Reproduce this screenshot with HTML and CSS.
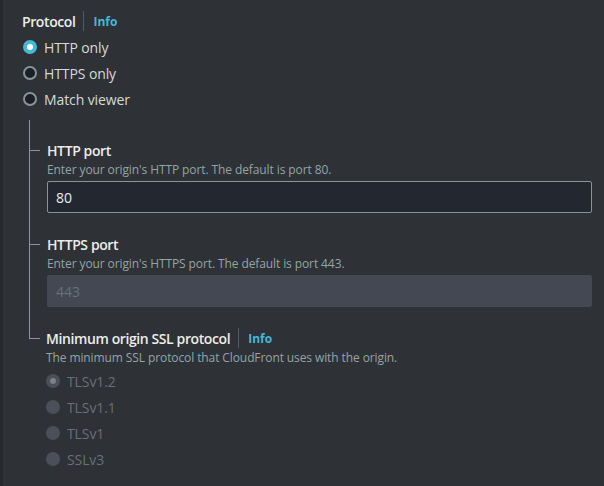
FILE: index.html
```html
<!DOCTYPE html>
<html>
<head>
<meta charset="utf-8">
<link rel="stylesheet" href="styles.css">
</head>
<body>
<div class="page">
  <div class="edge"></div>
  <div class="content">
    <div class="label-row">
      <span class="label">Protocol</span>
      <span class="sep"></span>
      <span class="info">Info</span>
    </div>
    <div class="radios">
      <div class="radio-row"><span class="radio checked"></span><span class="radio-text">HTTP only</span></div>
      <div class="radio-row"><span class="radio"></span><span class="radio-text">HTTPS only</span></div>
      <div class="radio-row"><span class="radio"></span><span class="radio-text">Match viewer</span></div>
    </div>
    <div class="tree">
      <div class="node first">
        <div class="label-row"><span class="label">HTTP port</span></div>
        <div class="desc">Enter your origin's HTTP port. The default is port 80.</div>
        <div class="input">80</div>
      </div>
      <div class="node">
        <div class="label-row"><span class="label">HTTPS port</span></div>
        <div class="desc">Enter your origin's HTTPS port. The default is port 443.</div>
        <div class="input disabled">443</div>
      </div>
      <div class="node last">
        <div class="label-row">
          <span class="label">Minimum origin SSL protocol</span>
          <span class="sep"></span>
          <span class="info">Info</span>
        </div>
        <div class="desc">The minimum SSL protocol that CloudFront uses with the origin.</div>
        <div class="radios dis">
          <div class="radio-row"><span class="radio checked"></span><span class="radio-text">TLSv1.2</span></div>
          <div class="radio-row"><span class="radio"></span><span class="radio-text">TLSv1.1</span></div>
          <div class="radio-row"><span class="radio"></span><span class="radio-text">TLSv1</span></div>
          <div class="radio-row"><span class="radio"></span><span class="radio-text">SSLv3</span></div>
        </div>
      </div>
    </div>
  </div>
</div>
</body>
</html>
```
FILE: styles.css
```css
html, body {
  margin: 0;
  padding: 0;
  background: #2e3136;
}
body {
  font-family: "Open Sans", "Noto Sans", sans-serif;
  width: 604px;
  height: 486px;
  overflow: hidden;
}
.page {
  display: flex;
  height: 486px;
}
.edge {
  width: 3px;
  background: #26292d;
  flex: none;
}
.content {
  flex: 1;
  padding: 10px 12px 0 19px;
}
.label-row {
  display: flex;
  align-items: center;
  height: 22px;
}
.label {
  font-size: 14px;
  font-weight: 600;
  color: #eaeded;
  letter-spacing: -0.4px;
}
.sep {
  width: 1px;
  height: 20px;
  background: #545b64;
  margin: 0 9px 0 8px;
}
.info {
  font-size: 12px;
  font-weight: 700;
  color: #44b9d6;
}
.radios {
  display: flex;
  flex-direction: column;
  margin-top: 2px;
}
.radio-row {
  display: flex;
  align-items: center;
  height: 26px;
}
.radio {
  width: 14px;
  height: 14px;
  box-sizing: border-box;
  border-radius: 50%;
  border: 2px solid #879596;
  background: #1b1f26;
  margin-left: 1px;
  margin-right: 7px;
  flex: none;
}
.radio.checked {
  border: 4px solid #44b9d6;
  background: #ffffff;
}
.radio-text {
  font-size: 14px;
  color: #d5dbdb;
  letter-spacing: -0.1px;
}
.radios.dis .radio {
  border: none;
  background: #4b4f59;
}
.radios.dis .radio.checked {
  border: 4px solid #4b4f59;
  background: #7d8189;
}
.radios.dis .radio-text {
  color: #697078;
}
.tree {
  margin-top: 8px;
  margin-left: 7px;
  display: flex;
  flex-direction: column;
}
.node {
  position: relative;
  padding-left: 17px;
  border-left: 1px solid #8d9399;
  padding-bottom: 20px;
}
.node.first {
  padding-top: 19px;
}
.node.last {
  border-left: none;
  padding-bottom: 0;
}
.node::before {
  content: "";
  position: absolute;
  left: 0;
  top: 11px;
  width: 10px;
  height: 1px;
  background: #8d9399;
}
.node.first::before {
  top: 30px;
}
.node.last::before {
  top: 0;
  width: 10px;
  height: 11px;
  background: none;
  border-left: 1px solid #8d9399;
  border-bottom: 1px solid #8d9399;
}
.desc {
  font-size: 12px;
  color: #95a5a6;
  height: 17px;
  line-height: 17px;
  letter-spacing: -0.1px;
}
.input {
  margin-top: 3px;
  height: 32px;
  box-sizing: border-box;
  border: 1px solid #879596;
  border-radius: 2px;
  background: #232730;
  color: #eaeded;
  font-size: 14px;
  padding: 0 8px;
  display: flex;
  align-items: center;
}
.input.disabled {
  border-color: #444852;
  background: #444852;
  color: #687078;
}
.node.last .radios {
  margin-top: 2px;
}
.node.last .radio {
  margin-left: 0;
}
```
